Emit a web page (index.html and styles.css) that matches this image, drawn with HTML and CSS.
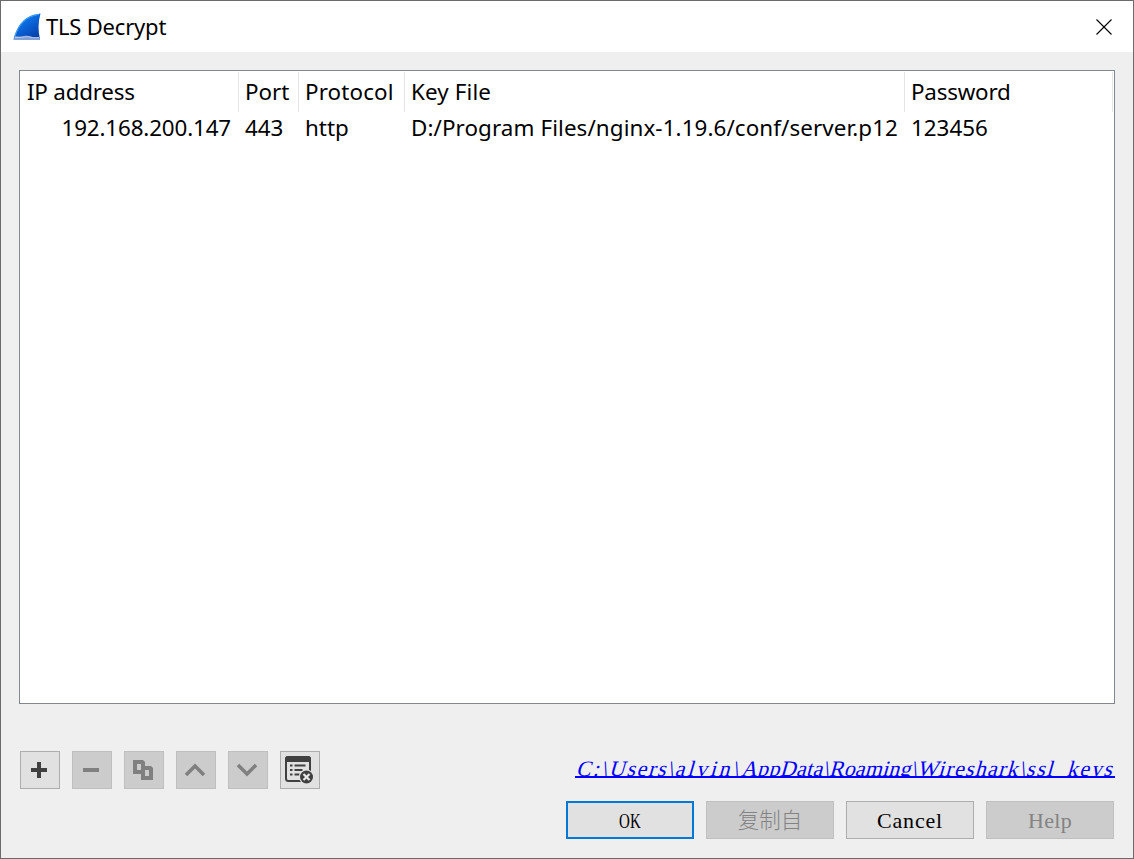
FILE: index.html
```html
<!DOCTYPE html>
<html lang="en">
<head>
<meta charset="utf-8">
<title>TLS Decrypt</title>
<link rel="stylesheet" href="styles.css">
</head>
<body>
<div class="window">
  <header class="titlebar">
    <svg class="logo" width="28" height="28" viewBox="0 0 28 28">
      <defs><linearGradient id="fin" x1="0" y1="0" x2="0.7" y2="1"><stop offset="0" stop-color="#2d9af5"/><stop offset=".45" stop-color="#0a6be0"/><stop offset="1" stop-color="#0741ac"/></linearGradient></defs>
      <path d="M.5 26.5C4 13 11 2 27.5.5C25 9 25 18 27 26.5Z" fill="url(#fin)"/>
      <path d="M1.5 24.5C6 11 13 3 26 1.5" fill="none" stroke="#5cb4fa" stroke-width=".8"/>
      <path d="M.5 26.5L2 23C9 24.5 13 21.500 18 23.500Q22 25 26.500 24L27 26.500Z" fill="#7f9fd8"/>
      <path d="M2 24.500Q9 25 14 23.500Q20 25.500 26 24.500" fill="none" stroke="#bdcdec" stroke-width=".8"/>
    </svg>
    <h1 class="title">TLS Decrypt</h1>
    <svg class="close" width="16" height="16" viewBox="0 0 16 16"><path d="M.5 .5L15.500 15.500M15.500 .5L.5 15.500" stroke="#000" stroke-width="1.1"/></svg>
  </header>
  <main class="content">
    <div class="table">
      <div class="row head">
        <div class="cell ip"><span class="t-head">IP address</span></div>
        <div class="cell port"><span>Port</span></div>
        <div class="cell proto"><span class="t-proto">Protocol</span></div>
        <div class="cell file"><span class="t-proto">Key File</span></div>
        <div class="cell pass"><span class="t-head">Password</span></div>
      </div>
      <div class="row data">
        <div class="cell ip"><span class="t-ip">192.168.200.147</span></div>
        <div class="cell port"><span>443</span></div>
        <div class="cell proto"><span>http</span></div>
        <div class="cell file"><span class="t-path">D:/Program Files/nginx-1.19.6/conf/server.p12</span></div>
        <div class="cell pass"><span>123456</span></div>
      </div>
    </div>
    <div class="toolbar">
      <div class="tools">
        <button class="tool"><svg viewBox="0 0 40 38"><path d="M11 17h6v-6h4v6h6v4h-6v6h-4v-6h-6z" fill="#404040"/></svg></button>
        <button class="tool off"><svg viewBox="0 0 40 38"><path d="M11 17h16v4H11z" fill="#808080"/></svg></button>
        <button class="tool off"><svg viewBox="0 0 40 38"><path fill-rule="evenodd" d="M9 9h10l2 2v4h6l2 2v12H17v-6H9zM13 13v6h4v-6zM21 19v6h4v-6z" fill="#808080"/></svg></button>
        <button class="tool off"><svg viewBox="0 0 40 38"><path d="M10 24l9-9 9 9" fill="none" stroke="#808080" stroke-width="3.600"/></svg></button>
        <button class="tool off"><svg viewBox="0 0 40 38"><path d="M10 14l9 9 9-9" fill="none" stroke="#808080" stroke-width="3.600"/></svg></button>
        <button class="tool"><svg viewBox="0 0 40 38">
          <rect x="6" y="6" width="24" height="24" rx="2.500" fill="none" stroke="#404040" stroke-width="2"/>
          <path d="M5 11V8q0-3 3-3h20q3 0 3 3v3z" fill="#404040"/>
          <path d="M10 14.500h2.500M14.500 14.500h11M10 19h2.500M14.500 19h8M10 23.500h2.500M14.500 23.500h5" stroke="#404040" stroke-width="2.200"/>
          <circle cx="26.500" cy="26" r="7.500" fill="#e1e1e1"/><circle cx="26.500" cy="26" r="6.500" fill="#404040"/>
          <path d="M23.500 23l6 6m0-6l-6 6" stroke="#e8e8e8" stroke-width="2.200"/>
        </svg></button>
      </div>
      <a class="link"><span class="path"><span class="s1">C:\</span><span class="s2">Users\</span><span class="s3">alvin\</span><span class="s4">AppData\</span><span class="s5">Roaming\</span><span class="s6">Wireshark\</span><span class="s7">ssl_keys</span></span></a>
    </div>
    <div class="actions">
      <button class="btn primary"><span class="serif narrow">OK</span></button>
      <button class="btn off"><span class="cjk">复制自</span></button>
      <button class="btn"><span class="serif">Cancel</span></button>
      <button class="btn off"><span class="serif tight">Help</span></button>
    </div>
  </main>
</div>
</body>
</html>
```
FILE: styles.css
```css
* { box-sizing: border-box; }
body { margin: 0; font: 22.400px "Noto Sans", sans-serif; color: #000; }
.window { width: 1134px; height: 859px; border: 1px solid #6b6b6b; background: #efefef; overflow: hidden; }
.titlebar { height: 51px; background: #fff; display: flex; align-items: center; padding: 0 21px 0 12px; }
.logo { flex: none; }
.title { margin: 0 auto 0 5px; padding-bottom: 2px; font-size: 22px; font-weight: 400; line-height: 30px; white-space: nowrap; letter-spacing: -.2px; }
.close { flex: none; }
.content { padding: 18px 18px 0; }
.table { width: 1096px; height: 634px; border: 1px solid #828790; background: #fff; padding-top: 1px; }
.row { display: flex; height: 40px; }
.cell { flex: none; padding-left: 6px; white-space: nowrap; line-height: 40px; }
.ip { width: 219px; padding-left: 7px; }
.port { width: 60px; }
.proto { width: 106px; }
.file { width: 500px; }
.pass { width: 208px; }
.head .cell { border-right: 1px solid #e5e5e5; }
.data { height: 34px; }
.data .cell { line-height: 32px; }
.data .ip { text-align: right; padding-right: 8px; }
.t-head { letter-spacing: -.22px; }
.t-proto { letter-spacing: .13px; }
.t-ip { letter-spacing: -.15px; }
.t-path { letter-spacing: .09px; }
.toolbar { display: flex; justify-content: space-between; margin-top: 47px; padding-left: 1px; height: 38px; }
.tools { display: flex; gap: 12px; }
.tool { width: 40px; height: 38px; padding: 0; border: 0; background: #e1e1e1; box-shadow: inset 0 0 0 1px #adadad; }
.tool svg { display: block; width: 40px; height: 38px; }
.off { background: #ccc; box-shadow: inset 0 0 0 1px #bfbfbf; color: #838383; }
.link { width: 540px; height: 22px; margin-top: 5px; overflow: hidden; border-bottom: 2px solid #00f; color: #00f; }
.path { display: block; width: max-content; padding-left: 1px; white-space: nowrap; font: 22px/25px "Liberation Serif", serif; transform: skewX(-16deg); transform-origin: 0 19px; }
.s1 { letter-spacing: 2px; }
.s2 { letter-spacing: 1.630px; }
.s3 { letter-spacing: 2.650px; }
.s4 { letter-spacing: .31px; }
.s5 { letter-spacing: .15px; }
.s6 { letter-spacing: 1.230px; }
.s7 { letter-spacing: 1.600px; }
.actions { display: flex; justify-content: flex-end; gap: 12px; margin-top: 12px; padding-right: 1px; }
.btn { width: 128px; height: 38px; padding: 0; border: 1px solid #adadad; background: #e1e1e1; color: #000; display: flex; align-items: center; justify-content: center; }
.btn.primary { border: 2px solid #0078d7; }
.btn.off { background: #ccc; border-color: #bfbfbf; box-shadow: none; color: #838383; }
.serif { padding-top: 2px; font: 22px/32px "Liberation Serif", serif; letter-spacing: .8px; }
.narrow { transform: scaleX(.68); letter-spacing: 0; }
.tight { letter-spacing: .3px; }
.cjk { padding-bottom: 2px; font: 300 21.500px/32px "Noto Sans CJK SC", sans-serif; }
```
